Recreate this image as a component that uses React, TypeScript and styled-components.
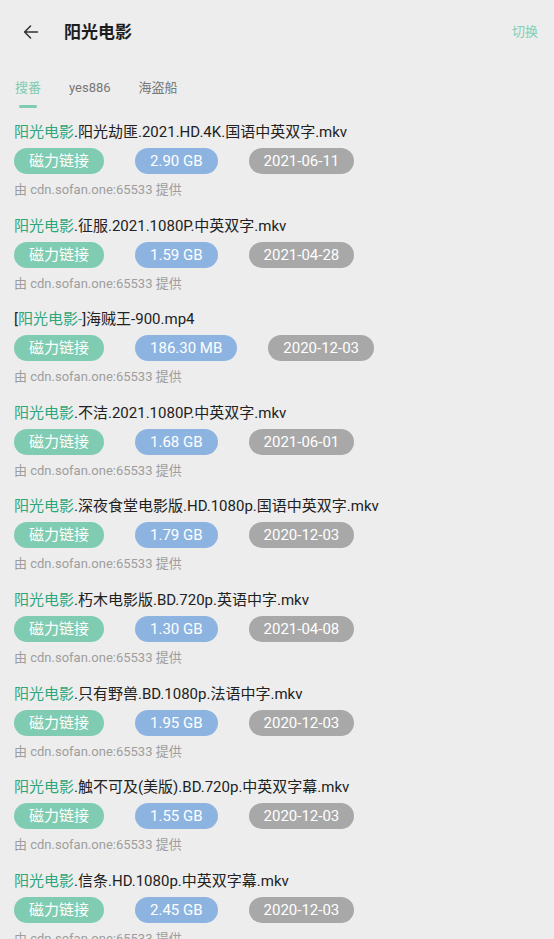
import styled, { createGlobalStyle } from 'styled-components'
import { useState } from 'react'

interface IResource {
    before?: string
    keyword: string
    rest: string
    size: string
    date: string
}

const resources: IResource[] = [
    { keyword: '阳光电影', rest: '.阳光劫匪.2021.HD.4K.国语中英双字.mkv', size: '2.90 GB', date: '2021-06-11' },
    { keyword: '阳光电影', rest: '.征服.2021.1080P.中英双字.mkv', size: '1.59 GB', date: '2021-04-28' },
    { before: '[', keyword: '阳光电影-', rest: ']海贼王-900.mp4', size: '186.30 MB', date: '2020-12-03' },
    { keyword: '阳光电影', rest: '.不洁.2021.1080P.中英双字.mkv', size: '1.68 GB', date: '2021-06-01' },
    { keyword: '阳光电影', rest: '.深夜食堂电影版.HD.1080p.国语中英双字.mkv', size: '1.79 GB', date: '2020-12-03' },
    { keyword: '阳光电影', rest: '.朽木电影版.BD.720p.英语中字.mkv', size: '1.30 GB', date: '2021-04-08' },
    { keyword: '阳光电影', rest: '.只有野兽.BD.1080p.法语中字.mkv', size: '1.95 GB', date: '2020-12-03' },
    { keyword: '阳光电影', rest: '.触不可及(美版).BD.720p.中英双字幕.mkv', size: '1.55 GB', date: '2020-12-03' },
    { keyword: '阳光电影', rest: '.信条.HD.1080p.中英双字幕.mkv', size: '2.45 GB', date: '2020-12-03' },
]

const tabs = ['搜番', 'yes886', '海盗船']

type TagKind = 'magnet' | 'size' | 'date'

const tagColors: Record<TagKind, string> = {
    magnet: '#80ccb2',
    size: '#8db4e1',
    date: '#a8a8a8',
}

export default function App() {
    const [activeTab, setActiveTab] = useState(0)

    return (
        <>
            <GlobalStyle />
            <Page>
                <Header>
                    <BackButton aria-label="返回">
                        <svg width="22" height="22" viewBox="0 0 24 24" fill="none">
                            <path
                                d="M19 12H5M11.5 5.5 5 12l6.5 6.5"
                                stroke="#333"
                                strokeWidth="1.7"
                                strokeLinecap="round"
                                strokeLinejoin="round"
                            />
                        </svg>
                    </BackButton>
                    <Title>阳光电影</Title>
                    <SwitchLink>切换</SwitchLink>
                </Header>

                <TabBar>
                    {tabs.map((name, i) => (
                        <Tab key={name} active={i === activeTab} onClick={() => setActiveTab(i)}>
                            <span>{name}</span>
                            <Indicator active={i === activeTab} />
                        </Tab>
                    ))}
                </TabBar>

                <List>
                    {resources.map((item, i) => (
                        <Item key={i}>
                            <ItemName>
                                {item.before}
                                <Keyword>{item.keyword}</Keyword>
                                {item.rest}
                            </ItemName>
                            <TagRow>
                                <Tag kind="magnet">磁力链接</Tag>
                                <Tag kind="size">{item.size}</Tag>
                                <Tag kind="date">{item.date}</Tag>
                            </TagRow>
                            <Source>由 cdn.sofan.one:65533 提供</Source>
                        </Item>
                    ))}
                </List>
            </Page>
        </>
    )
}

const GlobalStyle = createGlobalStyle`
    html, body {
        margin: 0;
        padding: 0;
        background: #ededed;
    }

    body {
        font-family: Roboto, 'Noto Sans CJK SC', sans-serif;
        color: #222;
    }
`

const Page = styled.div`
    width: 554px;
    height: 939px;
    overflow: hidden;
    background: #ededed;
`

const Header = styled.div`
    height: 64px;
    display: flex;
    align-items: center;
    padding: 0 16px 0 20px;
`

const BackButton = styled.div`
    width: 22px;
    height: 22px;
    display: flex;
    align-items: center;
    justify-content: center;
`

const Title = styled.h1`
    margin: 0 0 0 22px;
    flex: 1;
    font-size: 17px;
    font-weight: 700;
    color: #1d1d1d;
    line-height: 24px;
`

const SwitchLink = styled.span`
    font-size: 13px;
    color: #7fd0b4;
    line-height: 20px;
`

const TabBar = styled.div`
    display: flex;
    padding: 14px 0 0 1px;
`

const Tab = styled.div<{ active: boolean }>`
    display: flex;
    flex-direction: column;
    align-items: center;
    padding: 0 14px;
    cursor: pointer;

    span {
        font-size: 13px;
        line-height: 20px;
        color: ${({ active }) => (active ? '#80ccb2' : '#777')};
    }
`

const Indicator = styled.div<{ active: boolean }>`
    margin-top: 7px;
    width: 18px;
    height: 3px;
    border-radius: 2px;
    background: ${({ active }) => (active ? '#80ccb2' : 'transparent')};
`

const List = styled.div`
    padding: 13px 14px 0;
    display: flex;
    flex-direction: column;
    row-gap: 15.6px;
`

const Item = styled.div`
    display: flex;
    flex-direction: column;
`

const ItemName = styled.div`
    font-size: 15px;
    line-height: 22px;
    color: #222;
    white-space: nowrap;
`

const Keyword = styled.span`
    color: #2ea67c;
`

const TagRow = styled.div`
    margin-top: 5px;
    display: flex;
    column-gap: 31px;
`

const Tag = styled.span<{ kind: TagKind }>`
    height: 26px;
    padding: 0 15px;
    border-radius: 13px;
    background: ${({ kind }) => tagColors[kind]};
    color: #fff;
    font-size: 15px;
    line-height: 26px;
    white-space: nowrap;
`

const Source = styled.div`
    margin-top: 7px;
    font-size: 13px;
    line-height: 18px;
    color: #9e9e9e;
`
